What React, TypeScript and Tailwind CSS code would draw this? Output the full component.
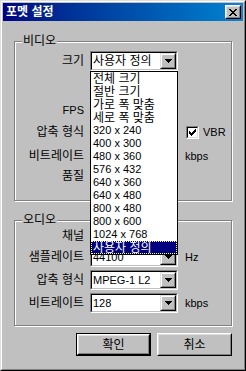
import React from "react";

const sizes = [
  "전체 크기",
  "절반 크기",
  "가로 폭 맞춤",
  "세로 폭 맞춤",
  "320 x 240",
  "400 x 300",
  "480 x 360",
  "576 x 432",
  "640 x 360",
  "640 x 480",
  "800 x 480",
  "800 x 600",
  "1024 x 768",
  "사용자 정의",
];

const isKo = (s: string) => /[가-힣]/.test(s);

function Arrow() {
  return (
    <div className="w-[16px] h-[16px] border border-t-[#dfdfdf] border-l-[#dfdfdf] border-r-black border-b-black">
      <div className="w-full h-full flex items-center justify-center bg-[#c0c0c0] border border-t-white border-l-white border-r-[#808080] border-b-[#808080]">
        <svg width="7" height="4" viewBox="0 0 7 4" shapeRendering="crispEdges">
          <path d="M0 0h7v1H0zM1 1h5v1H1zM2 2h3v1H2zM3 3h1v1H3z" fill="#000" />
        </svg>
      </div>
    </div>
  );
}

function Combo({ value }: { value: string }) {
  return (
    <div className="w-[88px] h-[20px] border border-t-[#808080] border-l-[#808080] border-r-white border-b-white">
      <div className="w-full h-full flex bg-white border border-t-black border-l-black border-r-[#c0c0c0] border-b-[#c0c0c0]">
        <div className={`flex-1 flex items-center pl-[1px] leading-none ${isKo(value) ? "text-[12px]" : "text-[11px]"}`}>
          {value}
        </div>
        <Arrow />
      </div>
    </div>
  );
}

// controls that sit under the open list: only their frame, nothing of them shows
function Hidden() {
  return <div className="w-[88px] h-[20px]" />;
}

function Row({
  label,
  children,
  extra,
  h = "h-[20px]",
  mt,
}: {
  label: string;
  children?: React.ReactNode;
  extra?: React.ReactNode;
  h?: string;
  mt: string;
}) {
  return (
    <div className={`flex items-center ${h} ${mt}`}>
      <span className={`w-[69px] text-right leading-none ${isKo(label) ? "text-[12px]" : "text-[11px]"}`}>
        {label}
      </span>
      <div className="ml-[6px] relative">{children}</div>
      {extra}
    </div>
  );
}

function Group({ title, h, mt, children }: { title: string; h: string; mt: string; children: React.ReactNode }) {
  return (
    <div
      className={`relative w-[218px] ${h} ${mt} border border-[#808080] shadow-[inset_1px_1px_0_#fff,1px_1px_0_#fff] flex flex-col`}
    >
      <span className="absolute left-[7px] -top-[8px] px-[1px] bg-[#c0c0c0] text-[12px] leading-[14px]">
        {title}
      </span>
      {children}
    </div>
  );
}

function Button({ label, isDefault }: { label: string; isDefault?: boolean }) {
  return (
    <div className={`w-[75px] h-[23px] bg-[#c0c0c0] ${isDefault ? "border border-black" : ""}`}>
      <div className="w-full h-full border border-t-white border-l-white border-r-black border-b-black">
        <div className="w-full h-full flex items-center justify-center text-[12px] leading-none border border-t-[#dfdfdf] border-l-[#dfdfdf] border-r-[#808080] border-b-[#808080]">
          {label}
        </div>
      </div>
    </div>
  );
}

export default function App() {
  return (
    <div className="w-[246px] h-[371px] bg-[#c0c0c0] text-black font-['Liberation_Sans','Noto_Sans_CJK_KR',sans-serif] border border-t-[#dfdfdf] border-l-[#dfdfdf] border-r-black border-b-black">
      <div className="w-full h-full p-[1px] border border-t-white border-l-white border-r-[#808080] border-b-[#808080] flex flex-col">
        {/* title bar */}
        <div className="h-[18px] flex items-center justify-between pl-[3px] pr-[2px] bg-linear-to-r from-[#000080] to-[#1084d0]">
          <span className="text-white text-[12px] font-bold leading-none">포멧 설정</span>
          <div className="w-[16px] h-[14px] border border-t-white border-l-white border-r-black border-b-black">
            <div className="w-full h-full flex items-center justify-center bg-[#c0c0c0] border border-t-[#dfdfdf] border-l-[#dfdfdf] border-r-[#808080] border-b-[#808080]">
              <svg width="8" height="7" viewBox="0 0 8 7" shapeRendering="crispEdges">
                <path
                  d="M0 0h2v1H0zM6 0h2v1H6zM1 1h2v1H1zM5 1h2v1H5zM2 2h4v1H2zM3 3h2v1H3zM2 4h4v1H2zM1 5h2v1H1zM5 5h2v1H5zM0 6h2v1H0zM6 6h2v1H6z"
                  fill="#000"
                />
              </svg>
            </div>
          </div>
        </div>

        <div className="flex flex-col px-[11px]">
          {/* video */}
          <Group title="비디오" h="h-[160px]" mt="mt-[20px]">
            <Row label="크기" mt="mt-[9px]">
              <Combo value="사용자 정의" />
              <div className="absolute left-0 top-[20px] z-10 w-[88px] bg-white border border-black flex flex-col">
                {sizes.map((s, i) => {
                  const sel = i === sizes.length - 1;
                  return (
                    <div
                      key={s}
                      className={`h-[13px] flex items-center leading-none whitespace-nowrap ${
                        isKo(s) ? "text-[12px]" : "text-[11px]"
                      } ${sel ? "bg-[#000080] text-white border border-dotted border-[#ffff80] pl-[1px]" : "pl-[2px]"}`}
                    >
                      {s}
                    </div>
                  );
                })}
              </div>
            </Row>
            <Row label="FPS" mt="mt-[29px]">
              <Hidden />
            </Row>
            <Row
              label="압축 형식"
              mt="mt-[2px]"
              extra={
                <div className="flex items-center ml-[8px]">
                  <div className="w-[13px] h-[13px] border border-t-[#808080] border-l-[#808080] border-r-white border-b-white">
                    <div className="w-full h-full flex items-center justify-center bg-white border border-t-black border-l-black border-r-[#dfdfdf] border-b-[#dfdfdf]">
                      <svg width="7" height="7" viewBox="0 0 7 7" shapeRendering="crispEdges">
                        <path
                          d="M6 0h1v1H6zM5 1h2v1H5zM0 2h1v1H0zM4 2h3v1H4zM0 3h2v1H0zM3 3h3v1H3zM0 4h5v1H0zM1 5h3v1H1zM2 6h1v1H2z"
                          fill="#000"
                        />
                      </svg>
                    </div>
                  </div>
                  <span className="ml-[4px] text-[11px] leading-none">VBR</span>
                </div>
              }
            >
              <Hidden />
            </Row>
            <Row
              label="비트레이트"
              mt="mt-[4px]"
              extra={<span className="ml-[7px] text-[11px] leading-none">kbps</span>}
            >
              <Hidden />
            </Row>
            <Row label="품질" h="h-[12px]" mt="mt-[4px]" />
          </Group>

          {/* audio */}
          <Group title="오디오" h="h-[106px]" mt="mt-[19px]">
            <Row label="채널" mt="mt-[5px]">
              <Hidden />
            </Row>
            <Row
              label="샘플레이트"
              mt="mt-[1px]"
              extra={<span className="ml-[7px] text-[11px] leading-none">Hz</span>}
            >
              <Combo value="44100" />
            </Row>
            <Row label="압축 형식" mt="mt-[3px]">
              <Combo value="MPEG-1 L2" />
            </Row>
            <Row
              label="비트레이트"
              mt="mt-[3px]"
              extra={<span className="ml-[7px] text-[11px] leading-none">kbps</span>}
            >
              <Combo value="128" />
            </Row>
          </Group>

          {/* buttons */}
          <div className="flex justify-end gap-[6px] mt-[7px]">
            <Button label="확인" isDefault />
            <Button label="취소" />
          </div>
        </div>
      </div>
    </div>
  );
}
